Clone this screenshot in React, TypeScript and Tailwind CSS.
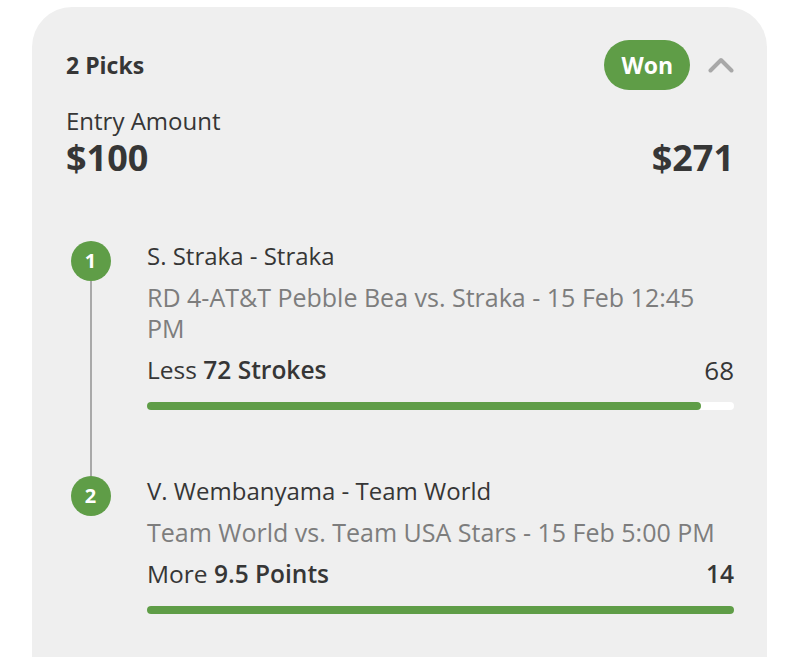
type Pick = {
  index: number;
  title: string;
  subtitle: string;
  direction: string;
  line: string;
  result: string;
  resultBold?: boolean;
  progress: number;
};

const picks: Pick[] = [
  {
    index: 1,
    title: "S. Straka - Straka",
    subtitle: "RD 4-AT&T Pebble Bea vs. Straka - 15 Feb 12:45 PM",
    direction: "Less",
    line: "72 Strokes",
    result: "68",
    progress: 94.4,
  },
  {
    index: 2,
    title: "V. Wembanyama - Team World",
    subtitle: "Team World vs. Team USA Stars - 15 Feb 5:00 PM",
    direction: "More",
    line: "9.5 Points",
    result: "14",
    resultBold: true,
    progress: 100,
  },
];

const PickRow = ({ pick, last }: { pick: Pick; last: boolean }) => {
  return (
    <div className="flex">
      <div className="flex w-[46px] flex-col items-center pl-[3px]">
        <div className="flex h-[40px] w-[40px] shrink-0 items-center justify-center rounded-full bg-[#5f9d47] text-[20px] font-bold text-white">
          {pick.index}
        </div>
        {!last && <div className="w-[2px] flex-1 bg-[#a9a9a9]" />}
      </div>
      <div className={`ml-[35px] flex-1 ${last ? "" : "pb-[66px]"}`}>
        <div className="text-[24px] leading-[30px] text-[#363636]">{pick.title}</div>
        <div className="mt-[11px] text-[25px] leading-[31px] text-[#7d7d7d]">{pick.subtitle}</div>
        <div className="mt-[11px] flex items-center justify-between text-[24.5px] leading-[30px] text-[#363636]">
          <div>
            {pick.direction} <span className="font-semibold">{pick.line}</span>
          </div>
          <div className={pick.resultBold ? "font-semibold" : "text-[26px]"}>{pick.result}</div>
        </div>
        <div className="mt-[17px] h-[8px] w-full rounded-full bg-white">
          <div className="h-full rounded-full bg-[#5f9d47]" style={{ width: `${pick.progress}%` }} />
        </div>
      </div>
    </div>
  );
};

export default function App() {
  return (
    <div className="h-[658px] w-full overflow-hidden bg-white px-[32px] pt-[7px] font-['Open_Sans',sans-serif]">
      <div className="h-[650px] w-[735px] rounded-t-[40px] bg-[#efefef] pl-[34px] pr-[33px] pt-[33px]">
        <div className="flex h-[50px] items-center justify-between">
          <div className="text-[23px] font-bold text-[#363636]">2 Picks</div>
          <div className="flex items-center">
            <div className="flex h-[50px] items-center rounded-full bg-[#5f9d47] px-[17px] text-[23px] font-bold text-white">
              Won
            </div>
            <svg className="ml-[18px]" width="26" height="18" viewBox="0 0 26 18" fill="none">
              <polyline
                points="2.5,14.5 13,4 23.5,14.5"
                stroke="#a8a8a8"
                strokeWidth="4"
                strokeLinecap="round"
                strokeLinejoin="round"
              />
            </svg>
          </div>
        </div>
        <div className="mt-[16px] text-[24px] leading-[30px] text-[#363636]">Entry Amount</div>
        <div className="mt-[2px] flex items-center justify-between text-[36px] font-bold leading-[40px] text-[#363636]">
          <div>$100</div>
          <div>$271</div>
        </div>
        <div className="mt-[63px]">
          {picks.map((p, i) => (
            <PickRow key={p.index} pick={p} last={i === picks.length - 1} />
          ))}
        </div>
      </div>
    </div>
  );
}
